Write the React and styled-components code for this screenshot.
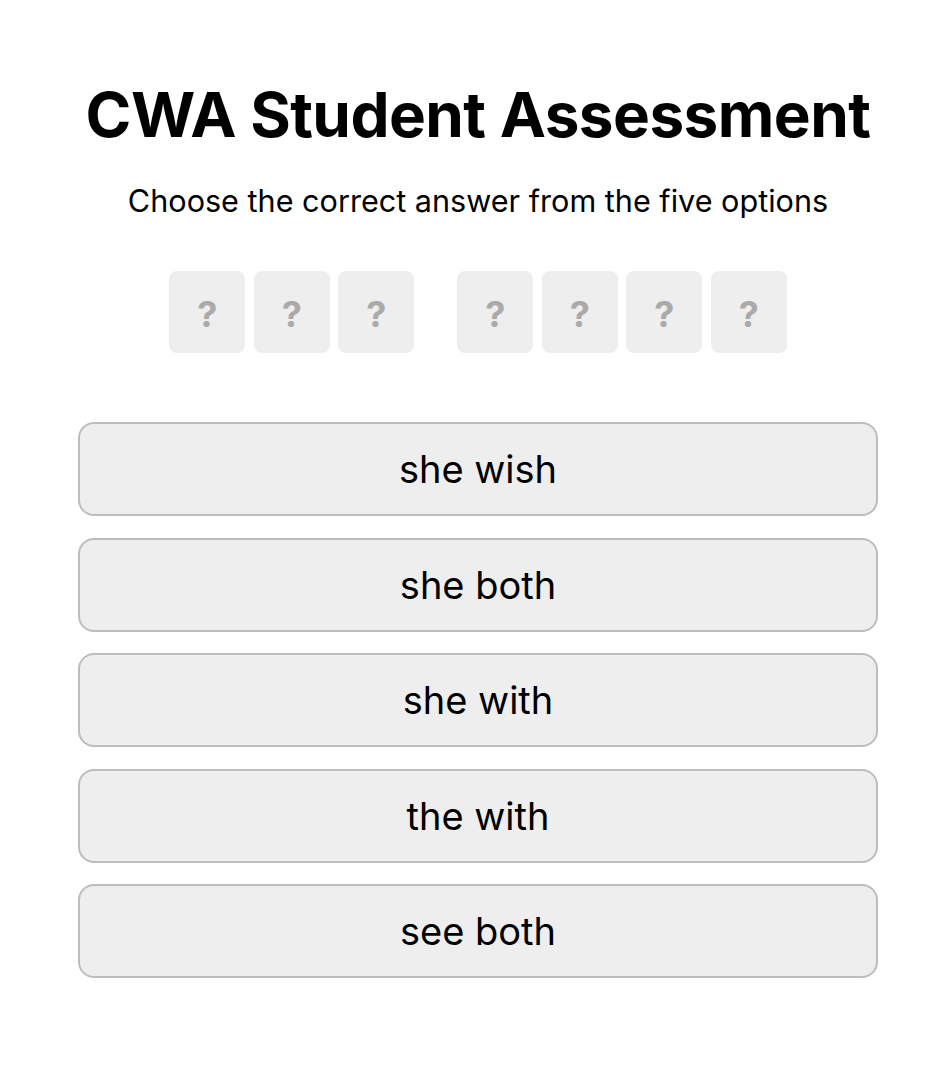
import React from "react";
import styled, { createGlobalStyle } from "styled-components";

const Global = createGlobalStyle`
  html, body { margin: 0; padding: 0; background: #fff; }
  body { font-family: Inter, "Noto Sans", "Liberation Sans", sans-serif; color: #000; }
`;

const Page = styled.div`
  box-sizing: border-box;
  width: 952px;
  display: flex;
  flex-direction: column;
  align-items: center;
  padding: 78px 0 0 4px;
`;

const Title = styled.h1`
  margin: 0;
  font-size: 62px;
  line-height: 74px;
  font-weight: 700;
  letter-spacing: -0.55px;
  text-align: center;
`;

const Subtitle = styled.p`
  margin: 31px 0 0;
  font-size: 30.6px;
  line-height: 36px;
  font-weight: 400;
  text-align: center;
`;

const Slots = styled.div`
  margin-top: 52px;
  display: flex;
  gap: 43px;
`;

const Group = styled.div`
  display: flex;
  gap: 8.5px;
`;

const Tile = styled.div`
  box-sizing: border-box;
  width: 76px;
  height: 82px;
  padding-top: 4px;
  border-radius: 8px;
  background: #eeeeee;
  display: flex;
  align-items: center;
  justify-content: center;
  font-size: 36px;
  font-weight: 700;
  color: #aaaaaa;
`;

const Options = styled.div`
  margin-top: 69px;
  width: 800px;
  display: flex;
  flex-direction: column;
  gap: 21.5px;
`;

const Option = styled.button`
  box-sizing: border-box;
  height: 94px;
  width: 100%;
  border: 2px solid #bdbdbd;
  border-radius: 16px;
  background: #eeeeee;
  font-family: inherit;
  font-size: 38px;
  color: #000;
  display: flex;
  align-items: center;
  justify-content: center;
  padding: 0;
`;

const options = ["she wish", "she both", "she with", "the with", "see both"];

export default function App() {
  return (
    <>
      <Global />
      <Page>
        <Title>CWA Student Assessment</Title>
        <Subtitle>Choose the correct answer from the five options</Subtitle>
        <Slots>
          <Group>
            {[0, 1, 2].map((i) => (
              <Tile key={i}>?</Tile>
            ))}
          </Group>
          <Group>
            {[0, 1, 2, 3].map((i) => (
              <Tile key={i}>?</Tile>
            ))}
          </Group>
        </Slots>
        <Options>
          {options.map((o) => (
            <Option key={o}>{o}</Option>
          ))}
        </Options>
      </Page>
    </>
  );
}
